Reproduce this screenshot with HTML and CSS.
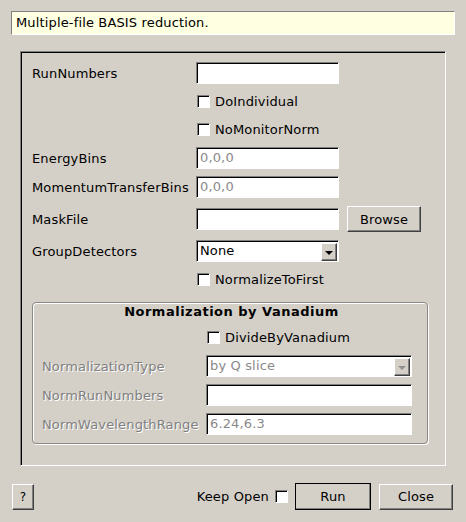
FILE: index.html
```html
<!DOCTYPE html>
<html>
<head>
<meta charset="utf-8">
<link rel="stylesheet" href="styles.css">
</head>
<body>
<div class="window">
  <div class="desc">Multiple-file BASIS reduction.</div>
  <div class="frame">
    <div class="row">
      <span class="label">RunNumbers</span>
      <span class="input"></span>
    </div>
    <div class="row gap6">
      <span class="label"></span>
      <span class="check"><span class="box"></span>DoIndividual</span>
    </div>
    <div class="row gap6">
      <span class="label"></span>
      <span class="check"><span class="box"></span>NoMonitorNorm</span>
    </div>
    <div class="row gap7">
      <span class="label">EnergyBins</span>
      <span class="input dim">0,0,0</span>
    </div>
    <div class="row gap7">
      <span class="label">MomentumTransferBins</span>
      <span class="input dim">0,0,0</span>
    </div>
    <div class="row gap8 tall">
      <span class="label">MaskFile</span>
      <span class="input"></span>
      <span class="btn browse">Browse</span>
    </div>
    <div class="row gap8">
      <span class="label">GroupDetectors</span>
      <span class="input combo">None<span class="arrow"><span class="tri"></span></span></span>
    </div>
    <div class="row gap6">
      <span class="label"></span>
      <span class="check"><span class="box"></span>NormalizeToFirst</span>
    </div>
    <div class="group">
      <div class="gtitle">Normalization by Vanadium</div>
      <div class="row gap7">
        <span class="label"></span>
        <span class="check"><span class="box"></span>DivideByVanadium</span>
      </div>
      <div class="row gap7">
        <span class="label off">NormalizationType</span>
        <span class="input wide combo dim">by Q slice<span class="arrow"><span class="tri dis"></span></span></span>
      </div>
      <div class="row gap7">
        <span class="label off">NormRunNumbers</span>
        <span class="input wide"></span>
      </div>
      <div class="row gap7">
        <span class="label off">NormWavelengthRange</span>
        <span class="input wide dim">6.24,6.3</span>
      </div>
    </div>
  </div>
  <div class="bottom">
    <span class="btn help">?</span>
    <div class="right">
      <span class="keep">Keep Open</span>
      <span class="box"></span>
      <span class="btn run">Run</span>
      <span class="btn close">Close</span>
    </div>
  </div>
</div>
</body>
</html>
```
FILE: styles.css
```css
* { box-sizing: border-box; }
html, body { margin: 0; padding: 0; }
body {
  background: #d4d0c8;
  font-family: "DejaVu Sans", sans-serif;
  font-size: 13px;
  letter-spacing: 0.15px;
  color: #000;
  width: 466px;
  height: 522px;
  overflow: hidden;
}
.window { padding: 11px; }
.desc {
  width: 444px;
  height: 24px;
  background: #ffffe1;
  border-top: 1px solid #808080;
  border-left: 1px solid #808080;
  border-bottom: 1px solid #fff;
  border-right: 1px solid #fff;
  padding-left: 4px;
  line-height: 22px;
}
.frame {
  margin: 16px 9px 0 9px;
  width: 426px;
  height: 415px;
  border-top: 1px solid #808080;
  border-left: 1px solid #808080;
  border-bottom: 1px solid #fff;
  border-right: 1px solid #fff;
  box-shadow: inset 1px 1px 0 #000;
  padding: 10px 0 0 11px;
}
.row {
  display: flex;
  align-items: center;
  height: 22px;
}
.row.tall { height: 26px; }
.gap6 { margin-top: 6px; }
.gap7 { margin-top: 7px; }
.gap8 { margin-top: 8px; }
.label {
  width: 164px;
  flex: none;
  white-space: nowrap;
}
.label.off {
  color: #808080;
  text-shadow: 1px 1px 0 #fff;
}
.input {
  position: relative;
  width: 143px;
  height: 22px;
  background: #fff;
  border-top: 1px solid #808080;
  border-left: 1px solid #808080;
  border-bottom: 1px solid #fff;
  border-right: 1px solid #fff;
  box-shadow: inset 1px 1px 0 #000;
  padding-left: 3px;
  line-height: 20px;
  white-space: nowrap;
}
.input.wide { width: 206px; }
.input.dim { color: #8a8a8a; }
.combo .arrow {
  position: absolute;
  right: 1px;
  top: 2px;
  width: 16px;
  height: 18px;
  background: #d4d0c8;
  border-top: 1px solid #fff;
  border-left: 1px solid #fff;
  border-right: 1px solid #404040;
  border-bottom: 1px solid #404040;
  box-shadow: inset -1px -1px 0 #808080;
  display: flex;
  align-items: center;
  justify-content: center;
}
.tri {
  width: 0;
  height: 0;
  border-left: 4px solid transparent;
  border-right: 4px solid transparent;
  border-top: 4px solid #000;
  margin-top: 1px;
}
.tri.dis { border-top-color: #909090; }
.check {
  display: flex;
  align-items: center;
  white-space: nowrap;
}
.box {
  display: inline-block;
  width: 13px;
  height: 13px;
  background: #fff;
  border-top: 1px solid #808080;
  border-left: 1px solid #808080;
  border-bottom: 1px solid #fff;
  border-right: 1px solid #fff;
  box-shadow: inset 1px 1px 0 #000;
  flex: none;
}
.check .box { margin: 0 5px 0 1px; }
.btn {
  display: flex;
  align-items: center;
  justify-content: center;
  height: 26px;
  background: #d4d0c8;
  border-top: 1px solid #fff;
  border-left: 1px solid #fff;
  border-right: 1px solid #404040;
  border-bottom: 1px solid #404040;
  box-shadow: inset -1px -1px 0 #808080;
}
.browse { width: 74px; margin-left: 8px; }
.group {
  margin-top: 12px;
  width: 396px;
  height: 142px;
  border: 1px solid #8c8882;
  border-radius: 4px;
  box-shadow: 1px 1px 0 #fff, inset 1px 1px 0 #fff;
  padding: 1px 15px 0 9px;
}
.gtitle {
  height: 15px;
  text-align: center;
  font-weight: bold;
  line-height: 15px;
  letter-spacing: 0.5px;
  padding-left: 9px;
}
.bottom {
  margin-top: 17px;
  display: flex;
  justify-content: space-between;
  align-items: center;
  padding: 0 2px 0 1px;
}
.help { width: 22px; height: 26px; font-size: 12px; }
.right { display: flex; align-items: center; }
.keep { margin-right: 6px; }
.run {
  width: 76px;
  height: 27px;
  margin-left: 7px;
  outline: 1px solid #000;
  outline-offset: -1px;
}
.close { width: 74px; margin-left: 8px; }
```
